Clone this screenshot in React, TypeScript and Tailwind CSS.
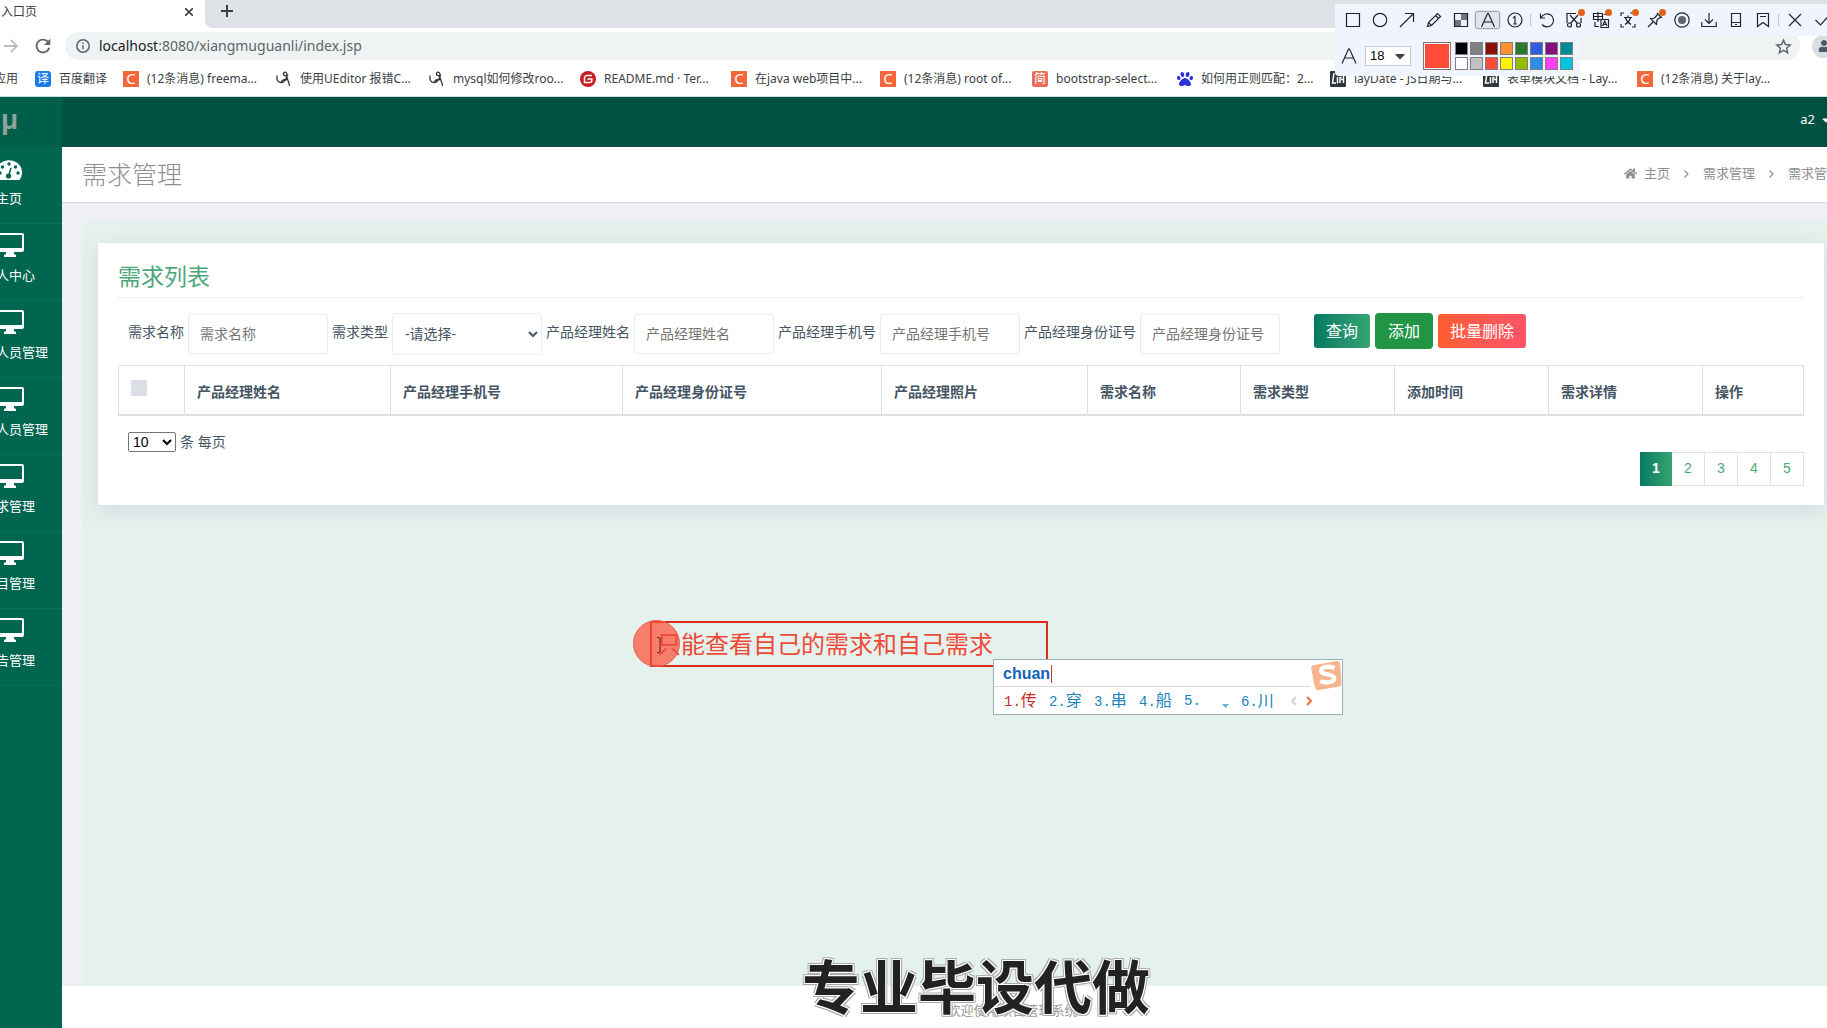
import type { ReactNode } from "react";
import { FaCaretDown, FaHome, FaPaw, FaUser } from "react-icons/fa";
import { MdRefresh } from "react-icons/md";

const BookmarkC = () => (
  <span className="flex w-4 h-4 shrink-0 items-center justify-center bg-[#f5673b] text-[15px] leading-none text-white">
    C
  </span>
);

const BookmarkSwirl = () => (
  <svg viewBox="0 0 16 16" className="w-4 h-4 shrink-0" fill="none" stroke="#333" strokeWidth="1.3">
    <path d="M1 4.500c-.5 4 .5 7 4 7 3 0 6.500-4 6-8C10.800.5 8 .5 7.500 2.500c-.5 2.500 3 3 4.500 1M11 3.500c-1 4 2 6 2.500 11.500M5.500 10.500c1-2 4-2.500 6.500-1.500" />
  </svg>
);

const BookmarkG = () => (
  <svg viewBox="0 0 16 16" className="w-4 h-4 shrink-0">
    <circle cx="8" cy="8" r="8" fill="#c71d23" />
    <path d="M12 4.500H7a2.500 2.500 0 0 0-2.500 2.500v4.500H10a1.800 1.800 0 0 0 1.800-1.800V8H7.500" fill="none" stroke="#fff" strokeWidth="1.500" />
  </svg>
);

const BookmarkLay = () => (
  <svg viewBox="0 0 16 16" className="w-4 h-4 shrink-0">
    <rect width="16" height="16" rx="1" fill="#2f363c" />
    <path d="M4 2L2.500 12H6M7.500 6v6.500M10 12V6.500h1.500M13.500 5v7M11 8.500h3" fill="none" stroke="#fff" strokeWidth="1.500" />
  </svg>
);

interface Bookmark {
  icon: ReactNode;
  title: string;
  width: string;
}

const bookmarks: Bookmark[] = [
  {
    icon: (
      <span className="flex w-4 h-4 shrink-0 items-center justify-center rounded-[3px] bg-[#1a7be8] text-[12px] leading-none text-white">
        译
      </span>
    ),
    title: "百度翻译",
    width: "w-[88px]",
  },
  { icon: <BookmarkC />, title: "(12条消息) freema...", width: "w-[153px]" },
  { icon: <BookmarkSwirl />, title: "使用UEditor 报错C...", width: "w-[153px]" },
  { icon: <BookmarkSwirl />, title: "mysql如何修改roo...", width: "w-[151px]" },
  { icon: <BookmarkG />, title: "README.md · Ter...", width: "w-[151px]" },
  { icon: <BookmarkC />, title: "在java web项目中...", width: "w-[149px]" },
  { icon: <BookmarkC />, title: "(12条消息) root of...", width: "w-[152px]" },
  {
    icon: (
      <span className="flex w-4 h-4 shrink-0 items-center justify-center rounded-[2px] bg-[#ea6f5a] text-[12px] leading-none text-white">
        简
      </span>
    ),
    title: "bootstrap-select...",
    width: "w-[145px]",
  },
  { icon: <FaPaw className="w-4 h-4 shrink-0 text-[#2a32d8]" />, title: "如何用正则匹配：2...", width: "w-[153px]" },
  { icon: <BookmarkLay />, title: "layDate - JS日期与...", width: "w-[153px]" },
  { icon: <BookmarkLay />, title: "表单模块文档 - Lay...", width: "w-[154px]" },
  { icon: <BookmarkC />, title: "(12条消息) 关于lay...", width: "w-[154px]" },
];

const Browser = () => (
  <div className="shrink-0 bg-white font-['Noto_Sans','Noto_Sans_CJK_SC',sans-serif] text-[#3c4043]">
    <div className="flex h-7 bg-[#dee1e6]">
      <div className="flex w-[205px] items-center justify-between bg-white pl-px pr-3 pb-1 text-[12px]">
        入口页
        <button aria-label="关闭标签页">
          <svg viewBox="0 0 8 8" className="w-2 h-2" stroke="#3c4043" strokeWidth="1.600">
            <path d="M0 0l8 8M8 0L0 8" />
          </svg>
        </button>
      </div>
      <div className="flex-1 bg-white">
        <div className="flex h-7 items-center rounded-bl-lg bg-[#dee1e6] pb-[6px] pl-4">
          <button aria-label="新标签页">
            <svg viewBox="0 0 12 12" className="w-3 h-3" stroke="#3c4043" strokeWidth="2">
              <path d="M6 0v12M0 6h12" />
            </svg>
          </button>
        </div>
      </div>
    </div>
    <div className="flex h-9 items-center">
      <button aria-label="前进" className="ml-1">
        <svg viewBox="0 0 14 14" className="w-[14px] h-[14px]" fill="none" stroke="#babcbe" strokeWidth="1.800">
          <path d="M0 7h12M7 1l6 6-6 6" />
        </svg>
      </button>
      <button aria-label="刷新" className="ml-[14px]">
        <MdRefresh className="w-[22px] h-[22px] text-[#5f6368]" />
      </button>
      <div className="ml-[11px] mr-3 flex h-7 flex-1 items-center rounded-full bg-[#eff3f4] pl-[11px] pr-2">
        <svg viewBox="0 0 14 14" className="w-[14px] h-[14px]" fill="none" stroke="#5f6368" strokeWidth="1.500">
          <circle cx="7" cy="7" r="6.200" />
          <path d="M7 6.200v4M7 3.500v1.500" />
        </svg>
        <span className="ml-[9px] flex-1 pb-px text-[14px] text-[#5f6368]">
          <span className="text-[#202124]">localhost</span>:8080/xiangmuguanli/index.jsp
        </span>
        <button aria-label="收藏">
          <svg viewBox="0 0 24 24" className="w-[17px] h-[17px]" fill="none" stroke="#5f6368" strokeWidth="2">
            <path d="M12 3l2.700 6.200 6.800.6-5.100 4.500 1.500 6.700L12 17.500 6.100 21l1.500-6.700-5.100-4.500 6.800-.6z" />
          </svg>
        </button>
      </div>
      <div className="-mr-2 flex w-[23px] h-[23px] items-center justify-center rounded-full bg-[#dadce0]">
        <FaUser className="w-3 h-3 text-[#4a5568]" />
      </div>
    </div>
    <div className="flex h-[33px] items-center border-b border-[#c9e3dc] pb-[3px] text-[12px] whitespace-nowrap">
      <a href="#" className="-ml-[6px] w-[41px] shrink-0">
        应用
      </a>
      {bookmarks.map(({ icon, title, width }) => (
        <a key={title} href="#" className={`flex shrink-0 items-center gap-2 ${width}`}>
          {icon}
          {title}
        </a>
      ))}
    </div>
  </div>
);

/* Screen capture toolbar */

interface ToolProps {
  label: string;
  children: ReactNode;
  hot?: boolean;
  active?: boolean;
}

const Tool = ({ label, children, hot, active }: ToolProps) => (
  <button
    aria-label={label}
    className={`relative flex w-[27px] h-5 shrink-0 items-center justify-center ${
      active ? "rounded-[4px] outline outline-1 -outline-offset-2 outline-[#9aa0aa] bg-[#e2e5ec]" : ""
    }`}
  >
    <svg viewBox="0 0 16 16" className="w-4 h-4 overflow-visible" fill="none" stroke="#20242e" strokeWidth="1.200">
      {children}
    </svg>
    {hot && <span className="absolute -top-[1px] right-[2px] w-[7px] h-[7px] rounded-full bg-[#e2641c]" />}
  </button>
);

const swatches = [
  "bg-black",
  "bg-[#808080]",
  "bg-[#8b1000]",
  "bg-[#ff9133]",
  "bg-[#2a7a2e]",
  "bg-[#315ee0]",
  "bg-[#86107e]",
  "bg-[#008a96]",
  "bg-white",
  "bg-[#c0c0c0]",
  "bg-[#ff4b38]",
  "bg-[#fff200]",
  "bg-[#94bd00]",
  "bg-[#2b8fea]",
  "bg-[#ff3ff5]",
  "bg-[#00c5de]",
];

const CaptureToolbar = () => (
  <div className="absolute top-1 right-0 z-20 w-[492px] overflow-hidden">
    <div className="flex h-8 w-[520px] items-center bg-[#f0f4fd] pl-1">
      <Tool label="矩形">
        <path d="M1.500 1.500h13v13h-13z" />
      </Tool>
      <Tool label="椭圆">
        <circle cx="8" cy="8" r="6.700" />
      </Tool>
      <Tool label="箭头">
        <path d="M1 15L14 2M6 1.500h8.500V10" />
      </Tool>
      <Tool label="画笔">
        <path d="M1.500 14.500l1-4L11.500 1.500l3 3-9 9zM9.500 3.500l3 3M2.500 10.500l3 3" />
      </Tool>
      <Tool label="马赛克">
        <path d="M2 2h6v6H2zM8 8h6v6H8z" fill="#eef1f8" stroke="none" />
        <path d="M8 2h6v6H8zM2 8h6v6H2z" fill="#6d7383" stroke="none" />
        <path d="M1.500 1.500h13v13h-13z" />
      </Tool>
      <Tool label="文字" active>
        <path d="M1.500 15L7.500 1.500h1L14.500 15M4 10h8" />
      </Tool>
      <Tool label="序号">
        <circle cx="8" cy="8" r="7" />
        <path d="M6 6l2-1.500V12M6 12h4" />
      </Tool>
      <span className="mx-[2px] h-3 w-px bg-[#c3c8d2]" />
      <Tool label="撤销">
        <path d="M1.500 1.500v4.500H6M2 6a6.500 6.500 0 1 1 1 6.500" />
      </Tool>
      <Tool label="裁剪" hot>
        <path d="M1 5V1.500h9M15 6v5M1 5v6M4 3l7.500 8.500M12 3l-7.500 8.500" />
        <circle cx="3.500" cy="13" r="2" />
        <circle cx="12.500" cy="13" r="2" />
      </Tool>
      <Tool label="翻译" hot>
        <path d="M.5 1.500h9v6h-9zM.5 4.500h9M5 0v10M2 10v4.500h4M11 2.500h3M8 7.500h7.500v8H8zM9.500 14l2.200-5 2.300 5M10.500 12.500h2.500" />
      </Tool>
      <Tool label="文字识别" hot>
        <path d="M1 4V1h3M1 12v3h3M15 12v3h-3M10 1h2M4 5.500h8M8 3.500v2M5.500 6c1 3 3 5 5.500 6.500M10.500 6c-1 3-3 5-5.500 6.500" />
      </Tool>
      <Tool label="钉住" hot>
        <path d="M1 15l5-5M3 6l7 7M4 7l3.500-1 3.500-4M9.500 12l.5-4 4-3.500M10 1l5 5" />
      </Tool>
      <Tool label="录屏">
        <circle cx="8" cy="8" r="7.200" />
        <circle cx="8" cy="8" r="4" fill="#5e6473" stroke="none" />
      </Tool>
      <Tool label="保存">
        <path d="M8 1v10M4 7.500L8 11.500l4-4M.8 10v4.500h14.400V10" />
      </Tool>
      <Tool label="手机">
        <path d="M3.500 1.500h9v13h-9zM3.500 10.500h9M7 12.500h2" />
      </Tool>
      <Tool label="收藏">
        <path d="M2.500 1.500h11v13L8 10.500l-5.500 4zM5 4.500h6" />
      </Tool>
      <span className="mx-[2px] h-3 w-px bg-[#c3c8d2]" />
      <Tool label="退出">
        <path d="M2 2l12 12M14 2L2 14" />
      </Tool>
      <Tool label="完成">
        <path d="M1.500 8l5 5L15 3.500" />
      </Tool>
    </div>
    <div className="flex h-10 w-[245px] items-center rounded-b bg-[#f0f4fd] pl-[5px]">
      <svg viewBox="0 0 16 16" className="w-[18px] h-4" fill="none" stroke="#20242e" strokeWidth="1.200">
        <path d="M1 15.500L7.500 1h1L15 15.500M3.500 10h9" />
      </svg>
      <button className="ml-[7px] flex w-[46px] h-5 items-center justify-between border border-[#c4c9d4] bg-white px-1 font-['Liberation_Sans',sans-serif] text-[13px] text-black">
        18
        <FaCaretDown className="w-3 h-4 text-[#444]" />
      </button>
      <span className="ml-3 w-7 h-7 shrink-0 border border-[#8b7274] bg-[#ff4b38] ring-1 ring-inset ring-white" />
      <div className="ml-1 grid grid-cols-8 gap-x-[2px] gap-y-[2px]">
        {swatches.map((color) => (
          <span key={color} className={`w-[13px] h-[13px] border border-[#7e7f86] ${color}`} />
        ))}
      </div>
    </div>
  </div>
);

/* Application */

const Gauge = () => (
  <svg viewBox="0 0 26 20" className="w-[26px] h-5">
    <path d="M2.500 20A13 12.500 0 1 1 23.500 20z" fill="#fff" />
    <g fill="#00664f">
      <circle cx="4" cy="13" r="1.700" />
      <circle cx="6.500" cy="7" r="1.700" />
      <circle cx="13" cy="4" r="1.700" />
      <circle cx="19.500" cy="7" r="1.700" />
      <circle cx="22" cy="13" r="1.700" />
      <circle cx="12.500" cy="16" r="2.600" />
    </g>
    <path d="M12.500 16l2.500-8" stroke="#00664f" strokeWidth="1.500" />
  </svg>
);

const Monitor = () => (
  <svg viewBox="0 0 28 24" className="w-7 h-6">
    <path d="M2 0h24a2 2 0 0 1 2 2v15a2 2 0 0 1-2 2h-8v2l2 1v2H8v-2l2-1v-2H2a2 2 0 0 1-2-2V2a2 2 0 0 1 2-2zM2 2v13h24V2z" fill="#fff" fillRule="evenodd" />
  </svg>
);

const menu = ["主页", "人中心", "人员管理", "人员管理", "求管理", "目管理", "告管理"];

const Sidebar = () => (
  <aside className="w-[62px] shrink-0 overflow-hidden bg-[#00664f] text-white">
    <div className="h-[50px] bg-[#005f4b] pl-px font-['Liberation_Sans',sans-serif] text-[28px] leading-[46px] font-bold text-[#8fa39c]">
      μ
    </div>
    <nav>
      {menu.map((label, i) => (
        <a
          key={i}
          href="#"
          className="flex h-[77px] flex-col justify-end gap-2 border-b border-[#0a6f58] pb-[15px] text-[13px] leading-5 whitespace-nowrap"
        >
          <span className="-ml-1">{i === 0 ? <Gauge /> : <Monitor />}</span>
          <span className="-ml-1">{label}</span>
        </a>
      ))}
    </nav>
  </aside>
);

const Crumb = () => (
  <svg viewBox="0 0 5 8" className="mx-[14px] w-[5px] h-2" fill="none" stroke="#8f8f8f" strokeWidth="1.200">
    <path d="M.5.5L4 4 .5 7.500" />
  </svg>
);

interface FieldProps {
  id: string;
  label: string;
}

const Field = ({ id, label }: FieldProps) => (
  <>
    <label htmlFor={id} className="pb-1">
      {label}
    </label>
    <input
      id={id}
      placeholder={label}
      className="w-[140px] h-10 rounded-[3px] border border-[#e3efeb] px-[11px] text-[14px] placeholder:text-[#757575]"
    />
  </>
);

const columns = [
  { title: "产品经理姓名", width: "w-[206px]" },
  { title: "产品经理手机号", width: "w-[232px]" },
  { title: "产品经理身份证号", width: "w-[259px]" },
  { title: "产品经理照片", width: "w-[206px]" },
  { title: "需求名称", width: "w-[153px]" },
  { title: "需求类型", width: "w-[154px]" },
  { title: "添加时间", width: "w-[154px]" },
  { title: "需求详情", width: "w-[154px]" },
  { title: "操作", width: "w-[101px]" },
];

const RequirementList = () => (
  <section className="rounded-[2px] bg-white px-5 pt-[18px] pb-[19px] text-[14px] text-[#455463] shadow-[0_5px_20px_rgba(200,208,225,0.7)]">
    <h2 className="border-b border-[#e9ebee] pb-[6px] text-[23px] leading-[30px] text-[#4ea77b]">需求列表</h2>
    <form className="flex h-[67px] items-center gap-1 pl-[10px] pt-1 whitespace-nowrap">
      <Field id="name" label="需求名称" />
      <label htmlFor="type" className="pb-1">
        需求类型
      </label>
      <select id="type" className="w-[150px] h-[42px] rounded-[3px] border border-[#e3efeb] pl-2 text-[14px]">
        <option>-请选择-</option>
      </select>
      <Field id="manager" label="产品经理姓名" />
      <Field id="phone" label="产品经理手机号" />
      <Field id="card" label="产品经理身份证号" />
      <div className="ml-[30px] flex items-center gap-[5px] pb-[6px] text-[16px] text-white">
        <button type="button" className="h-[34px] rounded-[3px] bg-linear-to-r from-[#027a63] to-[#35a473] px-3">
          查询
        </button>
        <button type="button" className="h-9 rounded-[4px] bg-[#209644] px-[13px]">
          添加
        </button>
        <button type="button" className="h-[34px] rounded-[3px] bg-linear-to-r from-[#ff5d2e] to-[#fe5468] px-3">
          批量删除
        </button>
      </div>
    </form>
    <table className="w-full table-fixed border-collapse">
      <thead>
        <tr className="h-[49px] border border-b-2 border-[#dcdfe4] text-left font-bold">
          <th className="w-[66px] pl-3 pb-1">
            <input
              type="checkbox"
              aria-label="全选"
              className="block w-4 h-4 appearance-none bg-[#dcdfe5]"
            />
          </th>
          {columns.map(({ title, width }) => (
            <th key={title} className={`border-l border-[#dcdfe4] pt-1 pl-3 ${width}`}>
              {title}
            </th>
          ))}
        </tr>
      </thead>
    </table>
    <div className="flex items-center gap-1 pt-4 pl-[10px]">
      <select
        id="size"
        className="w-12 h-5 rounded-[2px] border border-[#767676] font-['Liberation_Sans',sans-serif] text-[14px] text-black"
      >
        <option>10</option>
      </select>
      <label htmlFor="size" className="leading-5">
        条 每页
      </label>
    </div>
    <div className="flex justify-end font-['Liberation_Sans',sans-serif] text-[14px]">
      <a
        href="#"
        className="flex w-8 h-[34px] items-center justify-center bg-linear-to-r from-[#027a63] to-[#35a473] font-bold text-white"
      >
        1
      </a>
      {[2, 3, 4, 5].map((n) => (
        <a
          key={n}
          href="#"
          className="flex w-[33px] h-[34px] items-center justify-center border border-l-0 border-[#dee2e6] text-[#4ea77b]"
        >
          {n}
        </a>
      ))}
    </div>
  </section>
);

/* Note being typed over the page, with the input method window */

const Annotation = () => (
  <div className="absolute top-[621px] left-[650px] z-10 w-[398px] h-[46px] border-2 border-[#dc2c18]">
    <span className="absolute -top-[3px] -left-[19px] w-[47px] h-[47px] rounded-full border border-[#e2624f] bg-[#ff4b38]/70" />
    <svg viewBox="0 0 8 16" className="absolute top-[14px] left-[4px] w-2 h-4" fill="none" stroke="#5c1a14">
      <path d="M1 .5h2l1 1 1-1h2M4 1.500v13M1 15.500h2l1-1 1 1h2" />
    </svg>
    <p className="relative pl-[5px] text-[24px] leading-[42px] whitespace-nowrap text-[#ee4936]">
      只能查看自己的需求和自己需求
    </p>
  </div>
);

interface CandidateProps {
  index: number;
  word?: string;
}

const Candidate = ({ index, word }: CandidateProps) => (
  <span
    className={`flex w-[45px] shrink-0 items-baseline text-[16px] leading-6 ${index === 1 ? "text-[#c42e1e]" : ""}`}
  >
    <span className="font-['Liberation_Mono',monospace] text-[14px]">{index}.</span>
    {word}
  </span>
);

const InputMethod = () => (
  <div className="absolute top-[659px] left-[993px] z-20 w-[350px] h-[56px] border border-[#9fb0b2] bg-white">
    <div className="mr-8 flex h-[27px] items-center border-b border-[#d5d9db] pt-px pl-[9px] font-['Liberation_Sans',sans-serif] text-[16px] font-bold text-[#1463b8]">
      chuan
      <span className="ml-px w-px h-[18px] bg-[#c23a2a]" />
    </div>
    <div className="flex h-[27px] items-center pl-[10px] text-[#1a83b8]">
      <Candidate index={1} word="传" />
      <Candidate index={2} word="穿" />
      <Candidate index={3} word="串" />
      <Candidate index={4} word="船" />
      <Candidate index={5} />
      <svg viewBox="0 0 7 4" className="-ml-[7px] mt-[10px] mr-3 w-[7px] h-1" fill="#64b1dc">
        <path d="M0 0h7L3.500 4z" />
      </svg>
      <Candidate index={6} word="川" />
      <svg viewBox="0 0 24 10" className="ml-1 w-6 h-[10px]" fill="none" strokeWidth="2">
        <path d="M6 1L2 5l4 4" stroke="#d5d5d5" />
        <path d="M17 1l4 4-4 4" stroke="#e8743c" />
      </svg>
    </div>
    <svg viewBox="0 0 32 32" className="absolute top-0 right-0 w-8 h-[31px]">
      <path d="M3 5.500L27 1q3-.5 3.500 2.500L32 24q.3 3-3 3.500L8 31q-3 .5-3.500-2.500L.8 9Q.3 6 3 5.500z" fill="#f8b48c" />
      <path d="M25 8.500c-5-2.500-14-2-14 2.500 0 5 13 2.500 13.500 7.500.3 4.500-8 6-14.500 3.500" fill="none" stroke="#fff" strokeWidth="4.500" />
    </svg>
  </div>
);

export default function App() {
  return (
    <div className="relative flex min-h-screen flex-col overflow-hidden bg-[#eef0f4] font-['Noto_Sans','Noto_Sans_CJK_SC',sans-serif]">
      <Browser />
      <CaptureToolbar />
      <div className="flex flex-1">
        <Sidebar />
        <div className="flex min-w-0 flex-1 flex-col">
          <header className="flex h-[50px] items-center justify-end bg-[#005140] pb-1 text-[13px] text-white">
            <button className="-mr-1 flex items-center gap-[6px]">
              a2
              <FaCaretDown className="w-[10px] h-3" />
            </button>
          </header>
          <div className="flex h-[56px] items-center overflow-hidden border-b border-[#d8dade] bg-white pb-[2px] pl-5">
            <h1 className="flex-1 text-[25px] leading-8 font-light text-[#8e8e8e]">需求管理</h1>
            <nav className="-mr-[13px] flex shrink-0 items-center text-[13px] text-[#8f8f8f]">
              <FaHome className="mr-[7px] w-[13px] h-[13px]" />
              <a href="#">主页</a>
              <Crumb />
              <a href="#">需求管理</a>
              <Crumb />
              <a href="#">需求管理</a>
            </nav>
          </div>
          <main className="flex flex-1 flex-col pt-[19px] pl-5">
            <div className="flex-1 bg-[#e5f1ec] pt-[21px] pr-[3px] pl-4">
              <RequirementList />
            </div>
          </main>
          <footer className="h-[42px] bg-white pt-[14px] pl-[136px] text-center text-[13px] leading-5 text-[#999]">
            欢迎使用项目管理系统
          </footer>
        </div>
      </div>
      <Annotation />
      <InputMethod />
      <p className="absolute -bottom-[2px] left-[802px] z-20 text-[58px] leading-[86px] font-bold whitespace-nowrap text-[#222] [text-shadow:1px_1px_0_#fff,-1px_-1px_0_#fff,1px_-1px_0_#fff,-1px_1px_0_#fff,2px_2px_0_#aaa,-2px_-2px_0_#aaa,2px_-2px_0_#aaa,-2px_2px_0_#aaa]">
        专业毕设代做
      </p>
    </div>
  );
}
